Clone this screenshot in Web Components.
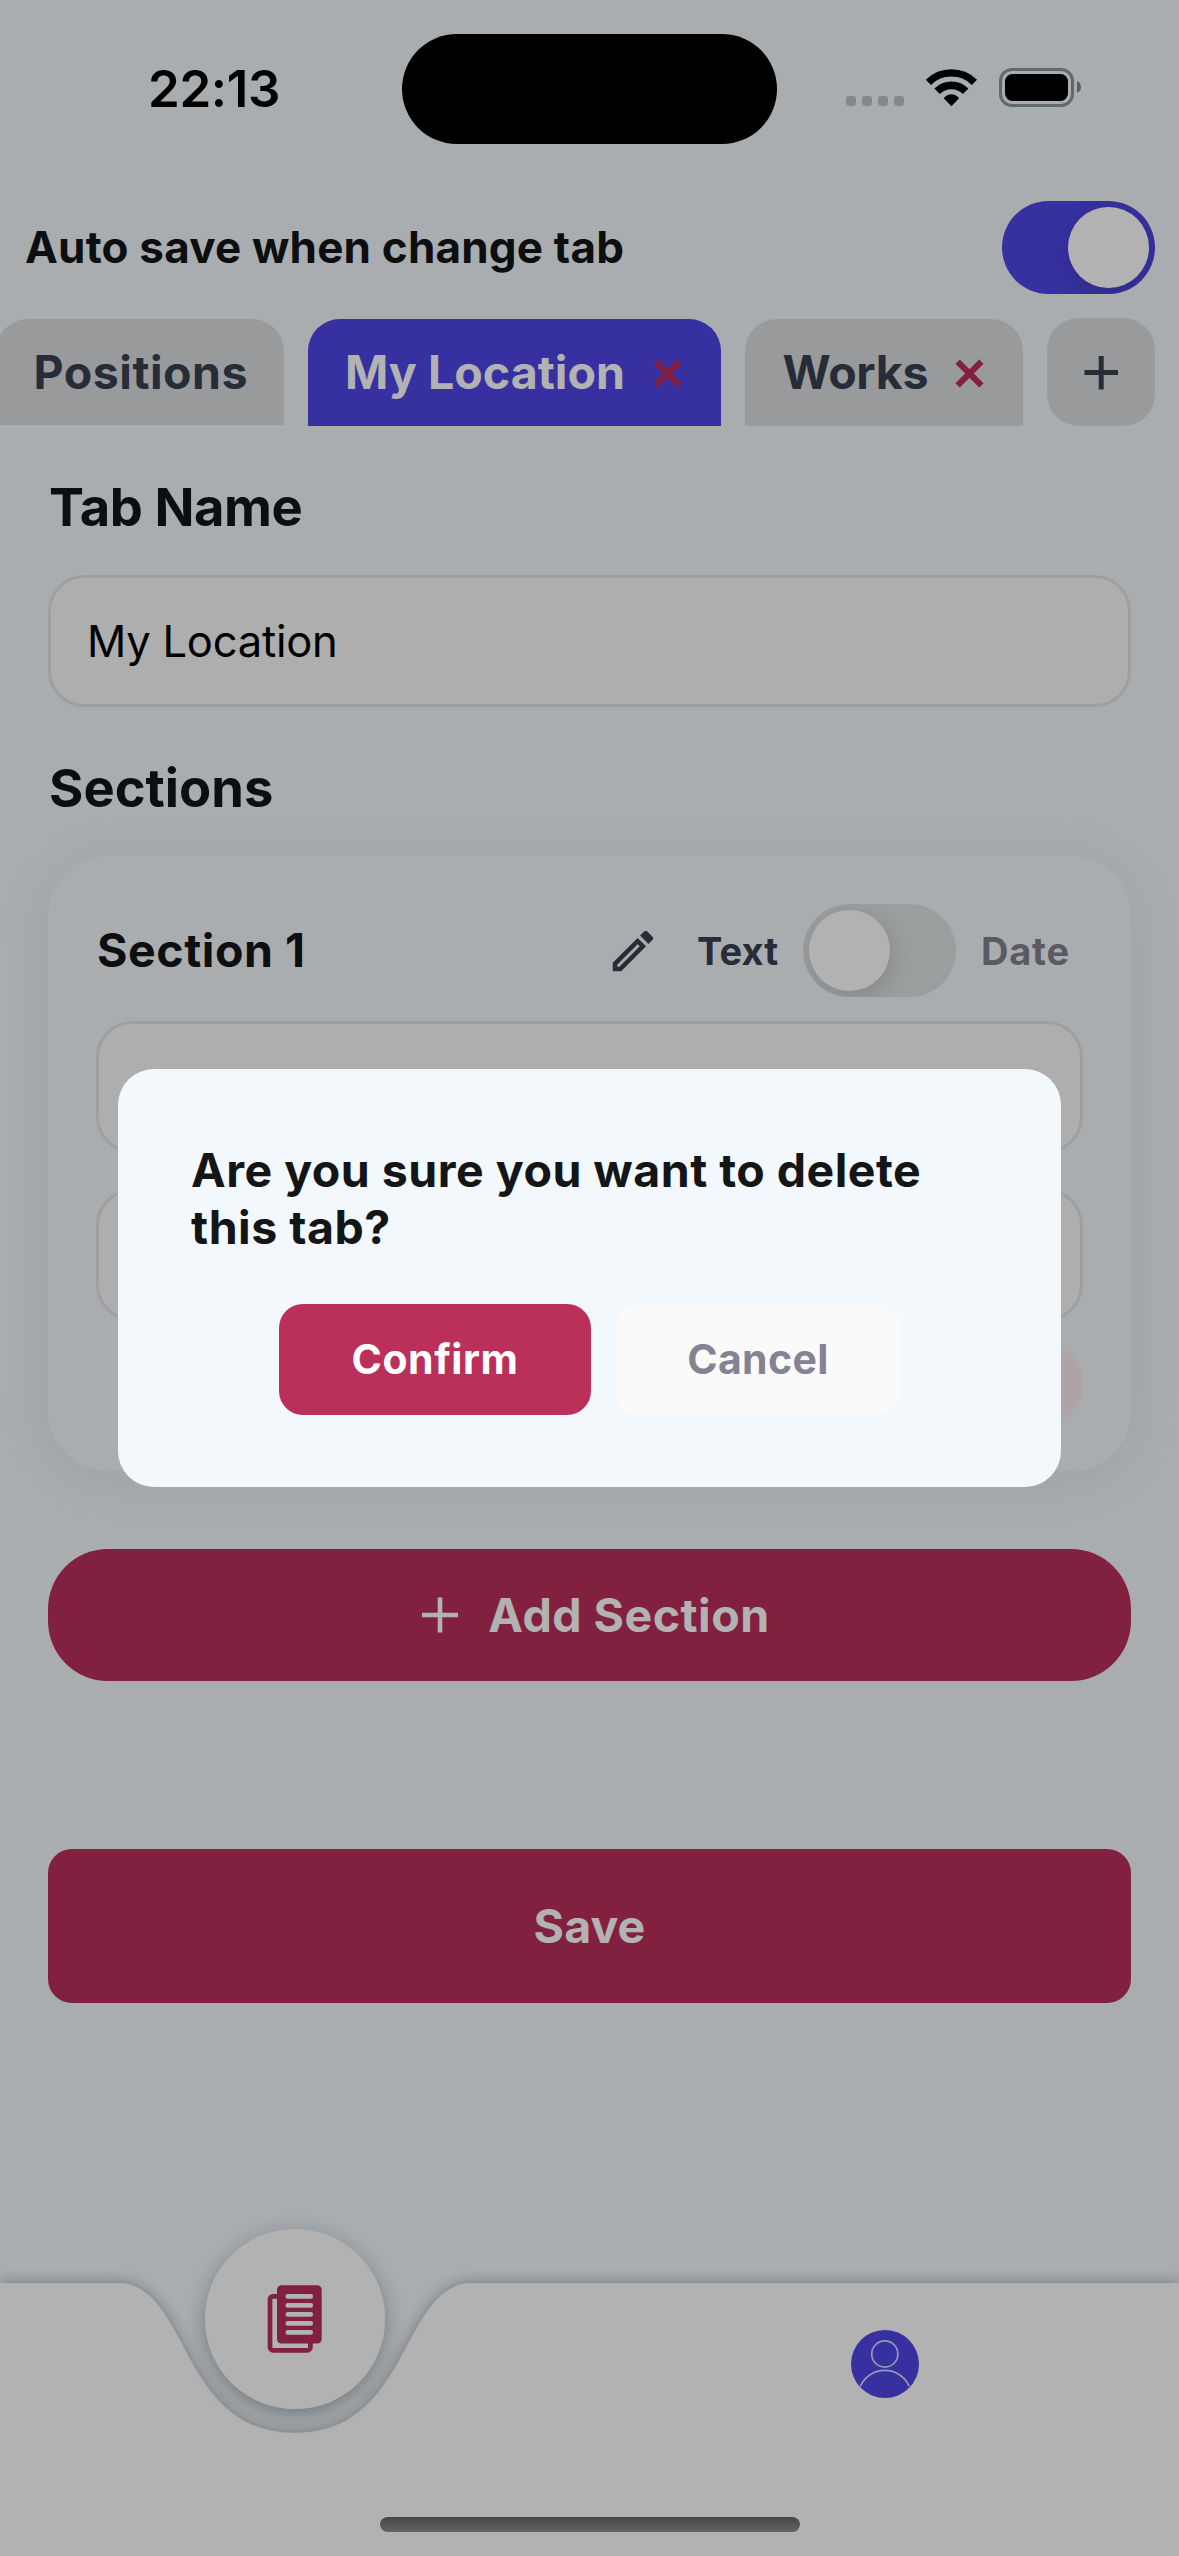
<!DOCTYPE html>
<html lang="en">
<head>
<meta charset="utf-8">
<title>Edit tab</title>
<style>
  html, body { margin: 0; }
  body {
    width: 1179px; height: 2556px; overflow: hidden;
    font-family: Inter, "Liberation Sans", sans-serif; font-weight: 700;
    --bg: #f3f8fc; --ink: #141517; --slate: #374151; --muted: #83818f;
    --primary: #4f46e5; --danger: #bb2f5b; --line: #e4e4e8; --field: #f9f9f9;
  }
</style>
</head>
<body>
<edit-screen>
  <status-bar slot="status">22:13</status-bar>
  <setting-row slot="setting">
    Auto save when change tab
    <toggle-switch slot="end" on></toggle-switch>
  </setting-row>
  <tab-strip slot="tabs">
    <tab-item style="width:284px;--pad:33.5px;--ls:.5px;--cut:4px;--h:106px">Positions</tab-item>
    <tab-item active closable style="width:413px;--pad:37px;--ls:.04px">My Location</tab-item>
    <tab-item closable style="width:278px;--pad:37.5px;--ls:-.3px">Works</tab-item>
    <tab-add></tab-add>
  </tab-strip>

  <section-label style="--ls:-.44px;margin-top:49px">Tab Name</section-label>
  <text-field style="margin-top:36px">My Location</text-field>
  <section-label style="--ls:0px;margin-top:49px">Sections</section-label>
  <section-card style="margin-top:36px">
    <span slot="title">Section 1</span>
    <text-field></text-field>
    <text-field></text-field>
  </section-card>
  <action-button pill icon style="height:132px;margin-top:78px;--ls:.5px">Add Section</action-button>
  <action-button style="height:154px;margin-top:168px;--ls:.1px">Save</action-button>

  <bottom-bar slot="nav"></bottom-bar>
  <confirm-dialog slot="dialog">
    Are you sure you want to delete this tab?
    <action-button slot="actions" small style="width:312px;--ls:.54px">Confirm</action-button>
    <action-button slot="actions" small ghost style="width:286px;--ls:.35px">Cancel</action-button>
  </confirm-dialog>
</edit-screen>

<script>
const define = (name, html) => customElements.define(name, class extends HTMLElement {
  constructor() {
    super();
    const t = document.createElement('template');
    t.innerHTML = html;
    this.attachShadow({ mode: 'open' }).append(t.content.cloneNode(true));
  }
});

define('edit-screen', `
  <style>
    :host { display: block; position: relative; width: 1179px; height: 2556px; overflow: hidden; background: var(--bg); color: var(--ink); }
    .page { display: flex; flex-direction: column; height: 100%; }
    .body { display: flex; flex-direction: column; padding: 0 48px; flex: 1; }
    .nav { position: absolute; left: 0; right: 0; bottom: 0; }
    .scrim { position: absolute; inset: 0; background: rgba(0,0,0,.3); display: flex; align-items: center; justify-content: center; }
  </style>
  <div class="page">
    <slot name="status"></slot>
    <slot name="setting"></slot>
    <slot name="tabs"></slot>
    <div class="body"><slot></slot></div>
  </div>
  <div class="nav"><slot name="nav"></slot></div>
  <div class="scrim"><slot name="dialog"></slot></div>
`);

define('status-bar', `
  <style>
    :host { display: flex; height: 201px; box-sizing: border-box; padding-top: 34px; align-items: flex-start; color: #000; }
    .time { width: 402px; height: 110px; box-sizing: border-box; padding: 0 0 2px 148px; display: flex; align-items: center; font-size: 51px; font-weight: 600; line-height: 1; letter-spacing: -.34px; }
    .island { width: 375px; height: 110px; border-radius: 55px; background: #000; }
    svg { display: block; margin: 30px 0 0 67px; }
  </style>
  <div class="time"><slot></slot></div>
  <div class="island"></div>
  <svg width="240" height="48" viewBox="844 64 240 48">
    <g fill="#bfc4c8">
      <rect x="846" y="96" width="10" height="10" rx="3"/><rect x="862" y="96" width="10" height="10" rx="3"/>
      <rect x="878" y="96" width="10" height="10" rx="3"/><rect x="894" y="96" width="10" height="10" rx="3"/>
    </g>
    <g fill="none" stroke="#000">
      <path stroke-width="7.4" d="M928.4 82.3A32.9 32.9 0 0 1 974.4 82.3"/>
      <path stroke-width="7.8" d="M937.1 91.3A20.2 20.2 0 0 1 965.7 91.3"/>
    </g>
    <path d="M951.4 106.2L943.7 98.2Q947 94.2 951.4 94.2T959.1 98.2Z"/>
    <rect x="1000.5" y="69.5" width="72" height="36" rx="11.5" fill="none" stroke="#8f9599" stroke-width="3"/>
    <rect x="1005" y="74" width="63" height="27" rx="7.5"/>
    <path d="M1077 81Q1081 83 1081 87T1077 93Z" fill="#85888b"/>
  </svg>
`);

define('toggle-switch', `
  <style>
    :host { display: flex; box-sizing: border-box; width: 153px; height: 93px; padding: 6px; border-radius: 47px; background: #dee2e4; overflow: hidden; }
    i { width: 81px; height: 81px; border-radius: 50%; background: #fff; box-shadow: 2px 6px 20px rgba(0,0,0,.14); }
    :host([on]) { background: var(--primary); justify-content: flex-end; }
    :host([on]) i { box-shadow: 0 6px 20px rgba(0,0,0,.15); }
  </style>
  <i></i>
`);

define('setting-row', `
  <style>
    :host { display: flex; align-items: center; justify-content: space-between; height: 93px; padding: 0 24px 0 25px; font-size: 44px; letter-spacing: .2px; line-height: 1; }
    span { padding-bottom: 2px; }
  </style>
  <span><slot></slot></span><slot name="end"></slot>
`);

define('tab-strip', `
  <style>:host { display: flex; gap: 24px; height: 108px; margin-top: 24px; align-items: flex-end; overflow: hidden; }</style>
  <slot></slot>
`);

define('tab-item', `
  <style>
    :host { display: block; box-sizing: border-box; height: 107px; color: var(--slate); }
    .tab { height: var(--h, 107px); margin-left: calc(0px - var(--cut, 0px)); padding: 0 39px 0 calc(var(--pad) + var(--cut, 0px)); background: #dcdddf;
      border-radius: 32px 32px 0 0; box-sizing: border-box; display: flex; align-items: center; justify-content: space-between;
      font-size: 46.5px; line-height: 1; letter-spacing: var(--ls, 0); white-space: nowrap; }
    :host([active]) .tab { background: var(--primary); color: #fff; }
    svg { display: none; }
    :host([closable]) svg { display: block; margin-top: 2px; }
  </style>
  <div class="tab"><span><slot></slot></span>
    <svg width="29" height="29" viewBox="0 0 29 29" stroke="#bb2f5b" stroke-width="6.2"><path d="M2.6 2.6L26.4 26.4M26.4 2.6L2.6 26.4"/></svg>
  </div>
`);

define('tab-add', `
  <style>:host { display: flex; align-items: center; justify-content: center; width: 108px; height: 108px; border-radius: 32px; background: #dcdddf; }</style>
  <svg width="36" height="36" viewBox="0 0 36 36" stroke="#374151" stroke-width="5"><path d="M1.5 18.5H35M18.2 2V35.5"/></svg>
`);

define('section-label', `
  <style>:host { display: flex; align-items: center; height: 64px; padding-left: 1px; font-size: 52.5px; line-height: 1; letter-spacing: var(--ls, 0); }</style>
  <span><slot></slot></span>
`);

define('text-field', `
  <style>
    :host { display: flex; align-items: center; box-sizing: border-box; height: 132px; padding: 2px 36px 0; border: 3px solid var(--line); border-radius: 36px;
      background: var(--field); color: #000; font-size: 43.5px; font-weight: 400; line-height: 1; letter-spacing: -.24px; }
  </style>
  <span><slot></slot></span>
`);

define('section-card', `
  <style>
    :host { display: flex; flex-direction: column; box-sizing: border-box; height: 615px; padding: 48px; border-radius: 60px; background: var(--bg);
      box-shadow: 0 6px 60px rgba(0,0,0,.075); }
    header { display: flex; align-items: center; height: 93px; margin-bottom: 24px; line-height: 1; }
    .title { flex: 1; padding-left: 1px; font-size: 46.5px; letter-spacing: .55px; }
    svg { display: block; margin-right: 37px; }
    .a, .b { font-size: 38px; }
    .a { color: var(--slate); letter-spacing: .1px; width: 80px; margin-right: 26px; }
    .b { color: var(--muted); letter-spacing: .8px; width: 90px; margin: 0 12px 0 25px; }
    .fields { display: flex; flex-direction: column; gap: 36px; }
    .remove { align-self: flex-end; width: 220px; height: 78px; margin-top: 24px; border-radius: 37px; background: #faebec; }
  </style>
  <header>
    <span class="title"><slot name="title"></slot></span>
    <svg width="54" height="54" viewBox="0 0 24 24" fill="#374151"><path d="M14.06 9L15 9.94 5.92 19H5v-.92L14.06 9M17.66 3c-.25 0-.51.1-.7.29l-1.83 1.83 3.75 3.75 1.83-1.83c.39-.39.39-1.04 0-1.41l-2.34-2.34c-.2-.2-.45-.29-.71-.29m-3.6 3.19L3 17.25V21h3.75L17.81 9.94l-3.75-3.75z"/></svg>
    <span class="a">Text</span><toggle-switch></toggle-switch><span class="b">Date</span>
  </header>
  <div class="fields"><slot></slot></div>
  <div class="remove"></div>
`);

define('action-button', `
  <style>
    :host { display: flex; align-items: center; justify-content: center; box-sizing: border-box; border-radius: 24px; background: var(--danger); color: #fff;
      font-size: 46.5px; line-height: 1; letter-spacing: var(--ls, 0); white-space: nowrap; }
    :host([pill]) { border-radius: 60px; }
    :host([small]) { height: 111px; font-size: 41px; }
    :host([ghost]) { background: #fafafa; color: #858393; }
    svg { display: none; }
    :host([icon]) svg { display: block; margin: 0 30px 0 13px; }
  </style>
  <svg width="36" height="36" viewBox="0 0 36 36" stroke="#fff" stroke-width="4.6"><path d="M0 18H36M18 .5V35.5"/></svg>
  <span><slot></slot></span>
`);

define('bottom-bar', `
  <style>
    :host { display: block; height: 375px; }
    svg { display: block; overflow: visible; }
  </style>
  <svg width="1179" height="375" viewBox="0 2181 1179 375">
    <defs>
      <filter id="bar" x="-5%" y="-20%" width="110%" height="140%"><feDropShadow dx="0" dy="0" stdDeviation="7" flood-color="#2c3338" flood-opacity=".42"/></filter>
      <filter id="ball" x="-30%" y="-30%" width="160%" height="160%"><feDropShadow dx="0" dy="6" stdDeviation="10" flood-color="#2c3338" flood-opacity=".38"/></filter>
      <linearGradient id="home" x2="0" y2="1"><stop stop-color="#646665"/><stop offset="1" stop-color="#8f8f8f"/></linearGradient>
    </defs>
    <path filter="url(#bar)" fill="#fff" d="M0 2283H117C190 2283 178 2433 295 2433S400 2283 473 2283H1179V2556H0Z"/>
    <circle filter="url(#ball)" cx="295" cy="2319" r="90" fill="#fff"/>
    <rect x="270" y="2296.3" width="40.4" height="54" rx="3" fill="none" stroke="#bb2f5b" stroke-width="4.7"/>
    <rect x="277" y="2285.3" width="44.7" height="58.2" rx="4.5" fill="#bb2f5b"/>
    <g fill="#fff">
      <rect x="285.5" y="2294" width="27.5" height="4.8" rx="2.2"/><rect x="285.5" y="2303" width="27.5" height="4.8" rx="2.2"/>
      <rect x="285.5" y="2312" width="27.5" height="4.8" rx="2.2"/><rect x="285.5" y="2321" width="27.5" height="4.8" rx="2.2"/>
      <rect x="285.5" y="2330" width="27.5" height="4.8" rx="2.2"/>
    </g>
    <circle cx="885" cy="2364" r="34" fill="#4f46e5"/>
    <g fill="none" stroke="#fff" stroke-opacity=".8" stroke-width="1.7">
      <circle cx="884.8" cy="2354" r="13.1"/><path d="M860.3 2386.3A26.8 26.8 0 0 1 909.3 2386.3"/>
    </g>
    <rect x="380" y="2517" width="420" height="15" rx="7.5" fill="url(#home)"/>
  </svg>
`);

define('confirm-dialog', `
  <style>
    :host { display: flex; flex-direction: column; box-sizing: border-box; width: 943px; height: 418px; border-radius: 36px; background: var(--bg); padding: 73px 70px 0 73px; }
    p { margin: 0; font-size: 46.5px; line-height: 57px; letter-spacing: .49px; }
    .actions { display: flex; justify-content: center; gap: 24px; margin-top: 48px; padding-right: 2px; }
  </style>
  <p><slot></slot></p>
  <div class="actions"><slot name="actions"></slot></div>
`);
</script>
</body>
</html>
